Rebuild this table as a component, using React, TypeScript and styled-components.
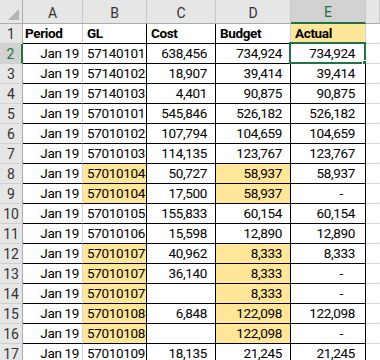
import React from "react";
import styled, { createGlobalStyle, css } from "styled-components";

const GlobalStyle = createGlobalStyle`
  html, body {
    margin: 0;
    padding: 0;
    background: #ffffff;
  }
`;

const GREEN = "#217346";
const YELLOW = "#ffe699";

type Line = "black" | "grid" | "none";

const Sheet = styled.div`
  display: grid;
  grid-template-columns: 23px 60px 64px 69px 75px 75px 14px;
  grid-template-rows: 24px;
  grid-auto-rows: 20px;
  width: 380px;
  height: 360px;
  overflow: hidden;
  font-family: Roboto, "Open Sans", sans-serif;
  font-size: 13.5px;
  letter-spacing: -0.35px;
  color: #000;
`;

const Corner = styled.div`
  position: relative;
  background: #e6e6e6;
  border-right: 1px solid #ababab;
  border-bottom: 1px solid #ababab;
  box-sizing: border-box;
`;

const CornerMark = styled.svg`
  position: absolute;
  right: 3px;
  bottom: 3px;
`;

const ColHead = styled.div<{ $active?: boolean }>`
  display: flex;
  align-items: center;
  justify-content: center;
  box-sizing: border-box;
  background: #e6e6e6;
  color: #333;
  font-size: 14px;
  letter-spacing: 0;
  border-right: 1px solid #c8c8c8;
  border-bottom: 1px solid #ababab;
  padding-top: 2px;
  ${(p) =>
    p.$active &&
    css`
      background: #d2d2d2;
      color: ${GREEN};
      border-bottom: 2px solid ${GREEN};
    `}
`;

const RowHead = styled.div<{ $active?: boolean }>`
  display: flex;
  align-items: center;
  justify-content: center;
  box-sizing: border-box;
  background: #e6e6e6;
  color: #333;
  font-size: 14px;
  letter-spacing: 0;
  border-right: 1px solid #ababab;
  border-bottom: 1px solid #d0d0d0;
  ${(p) =>
    p.$active &&
    css`
      background: #d2d2d2;
      color: ${GREEN};
      border-right: 2px solid ${GREEN};
    `}
`;

const Cell = styled.div<{
  $align: "left" | "right";
  $pad: number;
  $fill?: boolean;
  $bold?: boolean;
  $right: Line;
  $bottom: Line;
  $selected?: boolean;
}>`
  position: relative;
  display: flex;
  align-items: flex-end;
  justify-content: ${(p) => (p.$align === "left" ? "flex-start" : "flex-end")};
  box-sizing: border-box;
  padding: 0 ${(p) => (p.$align === "right" ? p.$pad : 0)}px 1px
    ${(p) => (p.$align === "left" ? p.$pad : 0)}px;
  line-height: 18px;
  white-space: nowrap;
  font-weight: ${(p) => (p.$bold ? 700 : 400)};
  background: ${(p) => (p.$fill ? YELLOW : "#fff")};
  border-right: 1px solid
    ${(p) => (p.$right === "black" ? "#000" : p.$right === "grid" ? "#d4d4d4" : "transparent")};
  border-bottom: 1px solid
    ${(p) => (p.$bottom === "black" ? "#000" : p.$bottom === "grid" ? "#d4d4d4" : "transparent")};
  ${(p) =>
    p.$selected &&
    css`
      &::before {
        content: "";
        position: absolute;
        left: -2px;
        top: -2px;
        right: -1px;
        bottom: -1px;
        border: 2px solid ${GREEN};
        pointer-events: none;
      }
      &::after {
        content: "";
        position: absolute;
        right: -4px;
        bottom: -4px;
        width: 5px;
        height: 5px;
        background: ${GREEN};
        border: 1px solid #fff;
      }
    `}
`;

type Row = {
  gl: string;
  glFill?: boolean;
  cost: string;
  budget: string;
  budgetFill?: boolean;
  actual: string;
};

const rows: Row[] = [
  { gl: "57140101", cost: "638,456", budget: "734,924", actual: "734,924" },
  { gl: "57140102", cost: "18,907", budget: "39,414", actual: "39,414" },
  { gl: "57140103", cost: "4,401", budget: "90,875", actual: "90,875" },
  { gl: "57010101", cost: "545,846", budget: "526,182", actual: "526,182" },
  { gl: "57010102", cost: "107,794", budget: "104,659", actual: "104,659" },
  { gl: "57010103", cost: "114,135", budget: "123,767", actual: "123,767" },
  { gl: "57010104", glFill: true, cost: "50,727", budget: "58,937", budgetFill: true, actual: "58,937" },
  { gl: "57010104", glFill: true, cost: "17,500", budget: "58,937", budgetFill: true, actual: "-" },
  { gl: "57010105", cost: "155,833", budget: "60,154", actual: "60,154" },
  { gl: "57010106", cost: "15,598", budget: "12,890", actual: "12,890" },
  { gl: "57010107", glFill: true, cost: "40,962", budget: "8,333", budgetFill: true, actual: "8,333" },
  { gl: "57010107", glFill: true, cost: "36,140", budget: "8,333", budgetFill: true, actual: "-" },
  { gl: "57010107", glFill: true, cost: "", budget: "8,333", budgetFill: true, actual: "-" },
  { gl: "57010108", glFill: true, cost: "6,848", budget: "122,098", budgetFill: true, actual: "122,098" },
  { gl: "57010108", glFill: true, cost: "", budget: "122,098", budgetFill: true, actual: "-" },
  { gl: "57010109", cost: "18,135", budget: "21,245", actual: "21,245" },
];

const letters = ["A", "B", "C", "D", "E", ""];

const App: React.FC = () => {
  return (
    <>
      <GlobalStyle />
      <Sheet>
        <Corner>
          <CornerMark width="11" height="11" viewBox="0 0 11 11">
            <polygon points="11,0 11,11 0,11" fill="#b4b4b4" />
          </CornerMark>
        </Corner>
        {letters.map((l, i) => (
          <ColHead key={i} $active={l === "E"}>
            {l}
          </ColHead>
        ))}

        <RowHead>1</RowHead>
        <Cell $align="left" $pad={2} $bold $right="grid" $bottom="black">Period</Cell>
        <Cell $align="left" $pad={4} $bold $right="black" $bottom="black">GL</Cell>
        <Cell $align="left" $pad={4} $bold $right="black" $bottom="black">Cost</Cell>
        <Cell $align="left" $pad={4} $bold $right="grid" $bottom="black">Budget</Cell>
        <Cell $align="left" $pad={4} $bold $fill $right="grid" $bottom="black">Actual</Cell>
        <Cell $align="left" $pad={0} $right="none" $bottom="grid" />

        {rows.map((r, i) => (
          <React.Fragment key={i}>
            <RowHead $active={i === 0}>{i + 2}</RowHead>
            <Cell $align="right" $pad={3} $right="grid" $bottom="black">Jan 19</Cell>
            <Cell $align="left" $pad={4} $fill={r.glFill} $right="black" $bottom="black">
              {r.gl}
            </Cell>
            <Cell $align="right" $pad={8} $right="black" $bottom="black">{r.cost}</Cell>
            <Cell $align="right" $pad={8} $fill={r.budgetFill} $right="black" $bottom="black">
              {r.budget}
            </Cell>
            <Cell
              $align="right"
              $pad={r.actual === "-" ? 22 : 10}
              $right="black"
              $bottom="black"
              $selected={i === 0}
            >
              {r.actual}
            </Cell>
            <Cell $align="left" $pad={0} $right="none" $bottom="grid" />
          </React.Fragment>
        ))}
      </Sheet>
    </>
  );
};

export default App;
